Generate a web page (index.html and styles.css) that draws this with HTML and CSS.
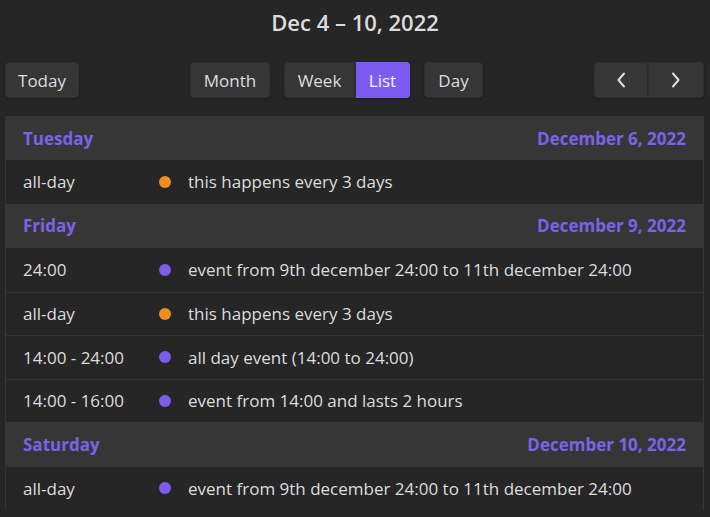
FILE: index.html
```html
<!DOCTYPE html>
<html lang="en">
<head>
<meta charset="utf-8">
<title>Calendar</title>
<link rel="stylesheet" href="styles.css">
</head>
<body>
<div class="calendar">
  <h2 class="title">Dec 4 – 10, 2022</h2>
  <div class="toolbar">
    <div class="chunk">
      <button class="btn btn-today">Today</button>
    </div>
    <div class="chunk chunk-views">
      <button class="btn btn-month">Month</button>
      <div class="group">
        <button class="btn btn-week">Week</button>
        <button class="btn btn-list active">List</button>
      </div>
      <button class="btn btn-day">Day</button>
    </div>
    <div class="chunk">
      <div class="group">
        <button class="btn btn-nav btn-prev" aria-label="prev">
          <svg width="10" height="16" viewBox="0 0 10 16"><path d="M8 1.5 L2.5 8 L8 14.5" fill="none" stroke="#dcddde" stroke-width="2" stroke-linecap="round" stroke-linejoin="round"/></svg>
        </button>
        <button class="btn btn-nav btn-next" aria-label="next">
          <svg width="10" height="16" viewBox="0 0 10 16"><path d="M2 1.5 L7.5 8 L2 14.5" fill="none" stroke="#dcddde" stroke-width="2" stroke-linecap="round" stroke-linejoin="round"/></svg>
        </button>
      </div>
    </div>
  </div>

  <div class="list">
    <div class="day-head"><span>Tuesday</span><span>December 6, 2022</span></div>
    <div class="event"><span class="time">all-day</span><span class="dot orange"></span><span class="name">this happens every 3 days</span></div>

    <div class="day-head"><span>Friday</span><span>December 9, 2022</span></div>
    <div class="event"><span class="time">24:00</span><span class="dot purple"></span><span class="name">event from 9th december 24:00 to 11th december 24:00</span></div>
    <div class="event"><span class="time">all-day</span><span class="dot orange"></span><span class="name">this happens every 3 days</span></div>
    <div class="event"><span class="time">14:00 - 24:00</span><span class="dot purple"></span><span class="name">all day event (14:00 to 24:00)</span></div>
    <div class="event"><span class="time">14:00 - 16:00</span><span class="dot purple"></span><span class="name">event from 14:00 and lasts 2 hours</span></div>

    <div class="day-head"><span>Saturday</span><span>December 10, 2022</span></div>
    <div class="event"><span class="time">all-day</span><span class="dot purple"></span><span class="name">event from 9th december 24:00 to 11th december 24:00</span></div>
  </div>
</div>
</body>
</html>
```

FILE: styles.css
```css
html, body {
  margin: 0;
  padding: 0;
  background: #262626;
}
body {
  font-family: "Open Sans", "Noto Sans", sans-serif;
  color: #dcddde;
  height: 517px;
  overflow: hidden;
}
.calendar {
  display: flex;
  flex-direction: column;
}
.title {
  margin: 0;
  height: 44px;
  line-height: 44px;
  text-align: center;
  font-size: 22px;
  font-weight: 600;
  color: #dcddde;
}
.toolbar {
  margin-top: 18px;
  display: flex;
  justify-content: space-between;
  align-items: center;
  padding: 0 6px 0 5px;
}
.chunk {
  display: flex;
  align-items: center;
}
.chunk-views {
  gap: 14px;
}
.btn {
  height: 36px;
  box-sizing: border-box;
  background: #363636;
  border: 1px solid #303030;
  border-radius: 4px;
  color: #dcddde;
  font-family: inherit;
  font-size: 17px;
  padding: 0;
  display: flex;
  align-items: center;
  justify-content: center;
  box-shadow: 0 1px 2px rgba(0,0,0,0.25);
}
.btn-today { width: 74px; }
.btn-month { width: 80px; }
.btn-week { width: 71px; }
.btn-list { width: 55px; }
.btn-day { width: 59px; }
.btn-prev { width: 54px; }
.btn-next { width: 56px; }
.group {
  display: flex;
}
.group .btn {
  border-radius: 0;
}
.group .btn:first-child {
  border-radius: 4px 0 0 4px;
}
.group .btn:last-child {
  border-radius: 0 4px 4px 0;
  border-left-color: #2e2e2e;
}
.btn.active {
  background: #7c5cf0;
  border-color: #7c5cf0;
  color: #f4f2ff;
}
.list {
  margin: 18px 6px 0 5px;
  border: 1px solid #363636;
  border-bottom: none;
  display: flex;
  flex-direction: column;
}
.day-head {
  height: 44.5px;
  flex: none;
  margin: 0 -1px;
  padding: 0 18px;
  background: #363636;
  display: flex;
  justify-content: space-between;
  align-items: center;
  color: #7c62e8;
  font-weight: 700;
  font-size: 17px;
}
.day-head:first-child {
  margin-top: -1px;
  height: 44px;
}
.event {
  height: 43.5px;
  flex: none;
  box-sizing: border-box;
  display: flex;
  align-items: center;
  background: #262626;
  border-top: 1px solid #353535;
  font-size: 17px;
  color: #dcddde;
}
.day-head + .event {
  border-top: none;
}
.time {
  width: 136px;
  padding-left: 17px;
}
.dot {
  width: 12px;
  height: 12px;
  border-radius: 50%;
  margin-right: 17px;
}
.dot.orange { background: #ef8d1d; }
.dot.purple { background: #7c5ce8; }
```
